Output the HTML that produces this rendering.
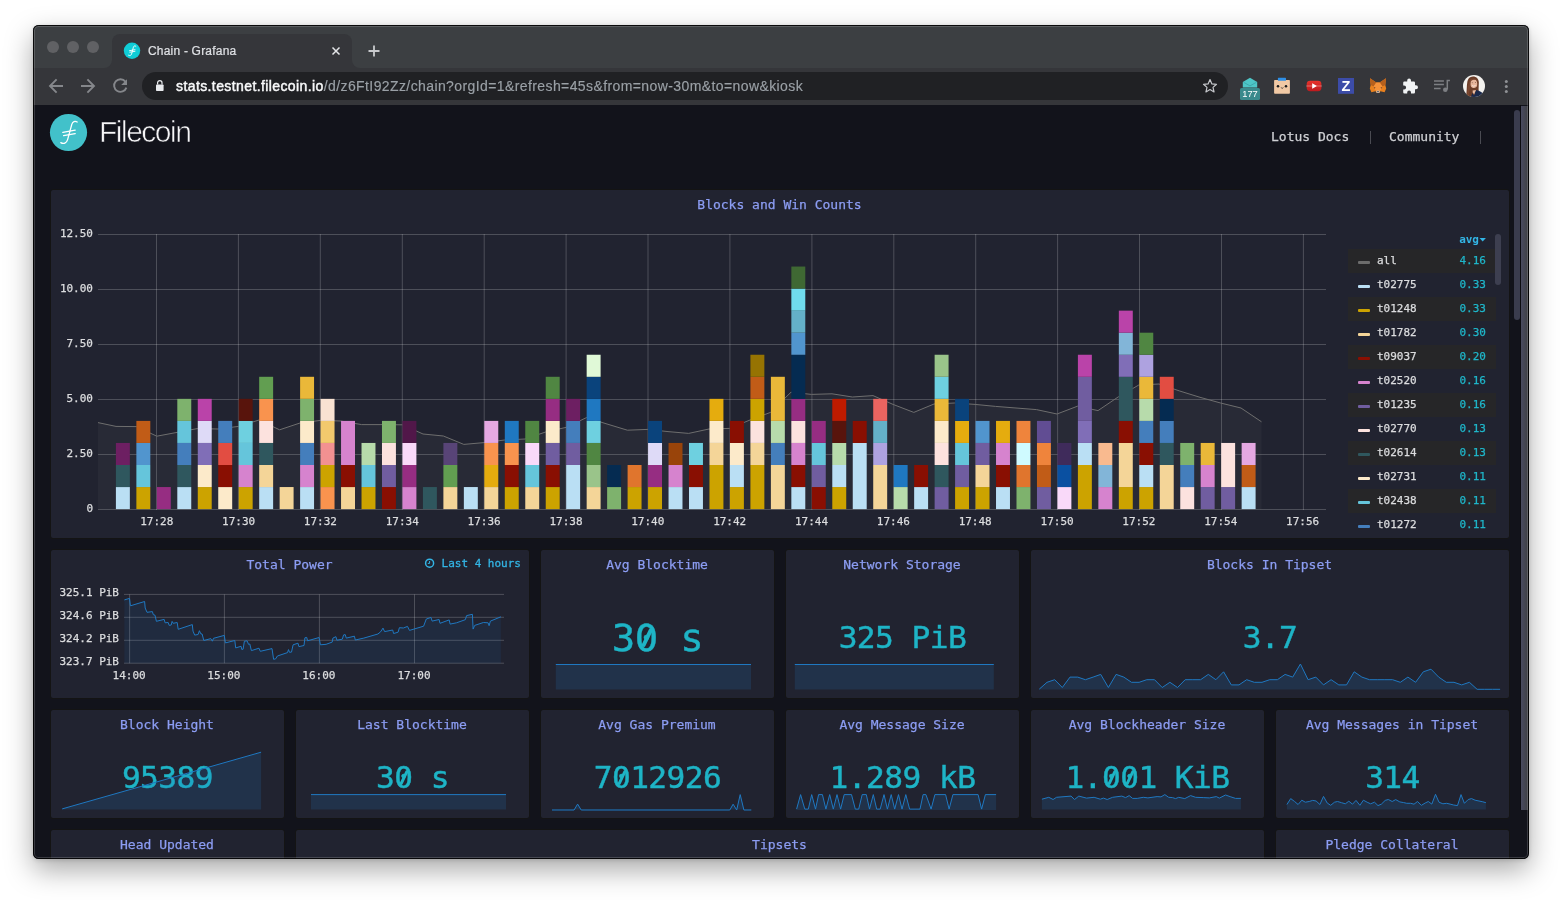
<!DOCTYPE html><html><head><meta charset="utf-8"><title>Chain - Grafana</title><style>
*{box-sizing:border-box}
html,body{margin:0;padding:0}
body{width:1562px;height:900px;overflow:hidden;background:#fff;position:relative;font-family:"DejaVu Sans Mono","Liberation Mono",monospace}
.win{position:absolute;left:33px;top:25px;width:1496px;height:834px;border-radius:5.5px;overflow:hidden;
 box-shadow:0 11px 28px 0 rgba(0,0,0,.34),0 1px 4px rgba(0,0,0,.14);background:#12131b}
.in{position:absolute;left:-33px;top:-25px;width:1562px;height:900px;will-change:transform}
.abs{position:absolute}
.frame{position:absolute;left:33px;top:25px;width:1496px;height:43px;background:#3c3f42}
.toolbar{position:absolute;left:33px;top:68px;width:1496px;height:37px;background:#35363a}
.tab{position:absolute;left:112px;top:34px;width:240px;height:34px;background:#35363a;border-radius:8px 8px 0 0}
.tl{position:absolute;width:12px;height:12px;border-radius:50%;background:#606164;top:41px}
.url{position:absolute;left:142px;top:72px;width:1086px;height:28px;border-radius:14px;background:#202124}
.t{position:absolute;white-space:nowrap;line-height:1}
.panel{position:absolute;background:#212330;border:1px solid #141414;border-radius:3px}
.ptitle{position:absolute;white-space:nowrap;color:#8c9df3;font-size:13px;line-height:16px;text-align:center;font-weight:normal;-webkit-text-stroke:0.25px #8c9df3}
.ax{position:absolute;white-space:nowrap;color:#dcdddf;font-size:11px;line-height:12px;-webkit-text-stroke:0.25px #dcdddf}
.val{position:absolute;white-space:nowrap;color:#1eb4c6;text-align:center;line-height:1;letter-spacing:-0.017em;-webkit-text-stroke:0.45px #1eb4c6;transform:scaleY(0.968);transform-origin:50% 88%}
.val s{position:relative;text-decoration:none;display:inline-block}
.val s::after{content:'';position:absolute;left:53.5%;top:48.8%;width:0.09em;height:0.5em;background:#1eb4c6;border-radius:0.04em;transform:translate(-50%,-50%) rotate(25deg)}
.lg{position:absolute;left:1348px;width:148px;height:24px}
.lg.odd{background:#262628}
.lg i{position:absolute;left:10px;top:12px;width:12px;height:3px;border-radius:1px}
.lg b{position:absolute;left:29px;top:5px;font-weight:normal;font-size:11px;line-height:13px;color:#dcdddf;-webkit-text-stroke:0.25px #dcdddf}
.lg u{position:absolute;right:10px;top:5px;text-decoration:none;font-size:11px;line-height:13px;color:#1fb6c9;-webkit-text-stroke:0.25px #1fb6c9}
</style></head><body>
<div class="win"><div class="in">
<div class="frame"></div><div class="tab"></div><div class="toolbar"></div>
<div class="tl" style="left:47px"></div>
<div class="tl" style="left:67px"></div>
<div class="tl" style="left:87px"></div>
<div class="url"></div>
<div class="t" id="tabtitle" style="left:148px;top:44px;font-family:'Liberation Sans',sans-serif;font-size:12px;color:#dfe1e5;line-height:14px;letter-spacing:0.2px;-webkit-text-stroke:0.2px #dfe1e5">Chain - Grafana</div>
<div class="t" id="urltext" style="left:176px;top:78px;font-family:'Liberation Sans',sans-serif;font-size:14px;line-height:16px;color:#9aa0a6;letter-spacing:0.4px;-webkit-text-stroke:0.15px #9aa0a6"><span style="color:#f8f9fa;-webkit-text-stroke:0.45px #f8f9fa">stats.testnet.filecoin.io</span>/d/z6FtI92Zz/chain?orgId=1&amp;refresh=45s&amp;from=now-30m&amp;to=now&amp;kiosk</div>
<div class="t" id="brand" style="left:99px;top:115.3px;font-family:'Liberation Sans',sans-serif;font-size:30px;line-height:34px;color:#f6f6f8;letter-spacing:-1.5px;-webkit-text-stroke:0.65px #12131b">Filecoin</div>
<div class="t" id="nav1" style="left:1271px;top:129px;font-size:13px;line-height:16px;color:#cfd0d4;-webkit-text-stroke:0.25px #cfd0d4">Lotus Docs</div>
<div class="t" id="nav2" style="left:1389px;top:129px;font-size:13px;line-height:16px;color:#cfd0d4;-webkit-text-stroke:0.25px #cfd0d4">Community</div>
<div class="abs" style="left:1370px;top:131px;width:1px;height:13px;background:#4a4b52"></div>
<div class="abs" style="left:1480px;top:131px;width:1px;height:13px;background:#4a4b52"></div>
<div class="panel" style="left:50px;top:189px;width:1460px;height:350px"></div>
<div class="panel" style="left:50px;top:549px;width:480px;height:150px"></div>
<div class="panel" style="left:540px;top:549px;width:235px;height:150px"></div>
<div class="panel" style="left:785px;top:549px;width:235px;height:150px"></div>
<div class="panel" style="left:1030px;top:549px;width:480px;height:150px"></div>
<div class="panel" style="left:50px;top:709px;width:235px;height:110px"></div>
<div class="panel" style="left:295px;top:709px;width:235px;height:110px"></div>
<div class="panel" style="left:540px;top:709px;width:235px;height:110px"></div>
<div class="panel" style="left:785px;top:709px;width:235px;height:110px"></div>
<div class="panel" style="left:1030px;top:709px;width:235px;height:110px"></div>
<div class="panel" style="left:1275px;top:709px;width:235px;height:110px"></div>
<div class="panel" style="left:50px;top:829px;width:235px;height:60px"></div>
<div class="panel" style="left:295px;top:829px;width:970px;height:60px"></div>
<div class="panel" style="left:1275px;top:829px;width:235px;height:60px"></div>
<div class="ptitle" style="left:49.5px;width:1460px;top:197px">Blocks and Win Counts</div>
<div class="ptitle" style="left:49.5px;width:480px;top:557px">Total Power</div>
<div class="ptitle" style="left:539.5px;width:235px;top:557px">Avg Blocktime</div>
<div class="ptitle" style="left:784.5px;width:235px;top:557px">Network Storage</div>
<div class="ptitle" style="left:1029.5px;width:480px;top:557px">Blocks In Tipset</div>
<div class="ptitle" style="left:49.5px;width:235px;top:717px">Block Height</div>
<div class="ptitle" style="left:294.5px;width:235px;top:717px">Last Blocktime</div>
<div class="ptitle" style="left:539.5px;width:235px;top:717px">Avg Gas Premium</div>
<div class="ptitle" style="left:784.5px;width:235px;top:717px">Avg Message Size</div>
<div class="ptitle" style="left:1029.5px;width:235px;top:717px">Avg Blockheader Size</div>
<div class="ptitle" style="left:1274.5px;width:235px;top:717px">Avg Messages in Tipset</div>
<div class="ptitle" style="left:49.5px;width:235px;top:837px">Head Updated</div>
<div class="ptitle" style="left:294.5px;width:970px;top:837px">Tipsets</div>
<div class="ptitle" style="left:1274.5px;width:235px;top:837px">Pledge Collateral</div>
<div class="val" style="left:540px;width:235px;top:617.7px;font-size:39px">3<s>0</s> s</div>
<div class="val" style="left:785px;width:235px;top:621.5px;font-size:31.2px">325 PiB</div>
<div class="val" style="left:1030px;width:480px;top:621.5px;font-size:31.2px">3.7</div>
<div class="val" style="left:50px;width:235px;top:761.8px;font-size:31.2px">95389</div>
<div class="val" style="left:295px;width:235px;top:761.8px;font-size:31.2px">3<s>0</s> s</div>
<div class="val" style="left:540px;width:235px;top:761.8px;font-size:31.2px">7<s>0</s>12926</div>
<div class="val" style="left:785px;width:235px;top:761.8px;font-size:31.2px">1.289 kB</div>
<div class="val" style="left:1030px;width:235px;top:761.8px;font-size:31.2px">1.<s>0</s><s>0</s>1 KiB</div>
<div class="val" style="left:1275px;width:235px;top:761.8px;font-size:31.2px">314</div>
<div class="ax" style="right:1469px;top:227.6px">12.50</div>
<div class="ax" style="right:1469px;top:282.6px">10.00</div>
<div class="ax" style="right:1469px;top:337.7px">7.50</div>
<div class="ax" style="right:1469px;top:392.7px">5.00</div>
<div class="ax" style="right:1469px;top:447.8px">2.50</div>
<div class="ax" style="right:1469px;top:502.8px">0</div>
<div class="ax" style="left:126.8px;width:60px;text-align:center;top:516px">17:28</div>
<div class="ax" style="left:208.6px;width:60px;text-align:center;top:516px">17:30</div>
<div class="ax" style="left:290.4px;width:60px;text-align:center;top:516px">17:32</div>
<div class="ax" style="left:372.3px;width:60px;text-align:center;top:516px">17:34</div>
<div class="ax" style="left:454.1px;width:60px;text-align:center;top:516px">17:36</div>
<div class="ax" style="left:536.0px;width:60px;text-align:center;top:516px">17:38</div>
<div class="ax" style="left:617.8px;width:60px;text-align:center;top:516px">17:40</div>
<div class="ax" style="left:699.7px;width:60px;text-align:center;top:516px">17:42</div>
<div class="ax" style="left:781.5px;width:60px;text-align:center;top:516px">17:44</div>
<div class="ax" style="left:863.4px;width:60px;text-align:center;top:516px">17:46</div>
<div class="ax" style="left:945.2px;width:60px;text-align:center;top:516px">17:48</div>
<div class="ax" style="left:1027.1px;width:60px;text-align:center;top:516px">17:50</div>
<div class="ax" style="left:1108.9px;width:60px;text-align:center;top:516px">17:52</div>
<div class="ax" style="left:1190.8px;width:60px;text-align:center;top:516px">17:54</div>
<div class="ax" style="left:1272.6px;width:60px;text-align:center;top:516px">17:56</div>
<div class="ax" style="right:1443px;top:587.2px">325.1 PiB</div>
<div class="ax" style="right:1443px;top:610.1px">324.6 PiB</div>
<div class="ax" style="right:1443px;top:633.1px">324.2 PiB</div>
<div class="ax" style="right:1443px;top:656.0px">323.7 PiB</div>
<div class="ax" style="left:99.1px;width:60px;text-align:center;top:669.5px">14:00</div>
<div class="ax" style="left:193.9px;width:60px;text-align:center;top:669.5px">15:00</div>
<div class="ax" style="left:288.9px;width:60px;text-align:center;top:669.5px">16:00</div>
<div class="ax" style="left:384.0px;width:60px;text-align:center;top:669.5px">17:00</div>
<div class="t" id="last4" style="right:1041px;top:557px;font-size:11px;line-height:13px;color:#33b5e5;-webkit-text-stroke:0.3px #33b5e5">Last 4 hours</div>
<div class="abs" style="left:1340px;top:230px;width:170px;height:308px;overflow:hidden">
<div class="t" style="right:31px;top:3px;font-size:11px;line-height:13px;color:#33b5e5;font-weight:bold">avg</div>
</div>
<div class="lg odd" style="top:249px;height:24px;overflow:hidden"><i style="background:#6c6c6c"></i><b>all</b><u>4.16</u></div>
<div class="lg" style="top:273px;height:24px;overflow:hidden"><i style="background:#BADFF4"></i><b>t02775</b><u>0.33</u></div>
<div class="lg odd" style="top:297px;height:24px;overflow:hidden"><i style="background:#CCA300"></i><b>t01248</b><u>0.33</u></div>
<div class="lg" style="top:321px;height:24px;overflow:hidden"><i style="background:#F4D598"></i><b>t01782</b><u>0.30</u></div>
<div class="lg odd" style="top:345px;height:24px;overflow:hidden"><i style="background:#890F02"></i><b>t09037</b><u>0.20</u></div>
<div class="lg" style="top:369px;height:24px;overflow:hidden"><i style="background:#D683CE"></i><b>t02520</b><u>0.16</u></div>
<div class="lg odd" style="top:393px;height:24px;overflow:hidden"><i style="background:#705DA0"></i><b>t01235</b><u>0.16</u></div>
<div class="lg" style="top:417px;height:24px;overflow:hidden"><i style="background:#FCE2DE"></i><b>t02770</b><u>0.13</u></div>
<div class="lg odd" style="top:441px;height:24px;overflow:hidden"><i style="background:#2F575E"></i><b>t02614</b><u>0.13</u></div>
<div class="lg" style="top:465px;height:24px;overflow:hidden"><i style="background:#FCEACA"></i><b>t02731</b><u>0.11</u></div>
<div class="lg odd" style="top:489px;height:24px;overflow:hidden"><i style="background:#65C5DB"></i><b>t02438</b><u>0.11</u></div>
<div class="lg" style="top:513px;height:24px;overflow:hidden"><i style="background:#447EBC"></i><b>t01272</b><u>0.11</u></div>
<svg class="abs" style="left:0;top:0" width="1562" height="900" viewBox="0 0 1562 900"><rect x="98" y="234" width="1228" height="1" fill="rgba(255,255,255,0.2)"/><rect x="98" y="289" width="1228" height="1" fill="rgba(255,255,255,0.2)"/><rect x="98" y="344" width="1228" height="1" fill="rgba(255,255,255,0.2)"/><rect x="98" y="399" width="1228" height="1" fill="rgba(255,255,255,0.2)"/><rect x="98" y="454" width="1228" height="1" fill="rgba(255,255,255,0.2)"/><rect x="98" y="509" width="1228" height="1" fill="rgba(255,255,255,0.2)"/><rect x="156.0" y="234" width="1" height="276" fill="rgba(255,255,255,0.2)"/><rect x="237.9" y="234" width="1" height="276" fill="rgba(255,255,255,0.2)"/><rect x="319.8" y="234" width="1" height="276" fill="rgba(255,255,255,0.2)"/><rect x="401.8" y="234" width="1" height="276" fill="rgba(255,255,255,0.2)"/><rect x="483.7" y="234" width="1" height="276" fill="rgba(255,255,255,0.2)"/><rect x="565.6" y="234" width="1" height="276" fill="rgba(255,255,255,0.2)"/><rect x="647.5" y="234" width="1" height="276" fill="rgba(255,255,255,0.2)"/><rect x="729.4" y="234" width="1" height="276" fill="rgba(255,255,255,0.2)"/><rect x="811.4" y="234" width="1" height="276" fill="rgba(255,255,255,0.2)"/><rect x="893.3" y="234" width="1" height="276" fill="rgba(255,255,255,0.2)"/><rect x="975.2" y="234" width="1" height="276" fill="rgba(255,255,255,0.2)"/><rect x="1057.1" y="234" width="1" height="276" fill="rgba(255,255,255,0.2)"/><rect x="1139.0" y="234" width="1" height="276" fill="rgba(255,255,255,0.2)"/><rect x="1221.0" y="234" width="1" height="276" fill="rgba(255,255,255,0.2)"/><rect x="1302.9" y="234" width="1" height="276" fill="rgba(255,255,255,0.2)"/><polygon points="98.0,422.6 116.0,426.4 136.4,426.6 156.8,436.2 177.0,432.4 197.7,428.5 218.0,429.0 238.6,426.4 259.0,420.0 279.6,429.8 300.0,423.0 320.5,420.4 341.0,421.0 361.6,424.6 382.0,424.6 402.5,424.8 423.0,434.0 443.4,436.0 463.8,444.4 484.0,442.6 504.7,440.0 525.0,439.0 545.6,432.0 566.0,427.4 586.5,417.6 607.0,424.0 627.4,430.2 647.8,429.4 668.0,431.6 688.7,433.4 709.0,429.0 729.6,428.4 750.0,420.0 770.5,412.4 791.0,392.2 811.4,394.4 832.0,393.8 852.4,397.0 873.0,395.6 893.0,404.4 913.8,412.4 934.0,404.0 954.7,403.0 975.0,404.4 995.6,406.4 1016.0,408.0 1036.5,409.6 1057.0,414.0 1077.5,406.2 1098.0,410.6 1118.4,396.8 1138.8,385.0 1159.0,384.0 1179.7,391.0 1200.0,397.3 1220.6,403.0 1241.0,408.0 1261.5,421.8 1261.5,509.5 98.0,509.5" fill="rgba(128,128,128,0.075)"/><polyline points="98.0,422.6 116.0,426.4 136.4,426.6 156.8,436.2 177.0,432.4 197.7,428.5 218.0,429.0 238.6,426.4 259.0,420.0 279.6,429.8 300.0,423.0 320.5,420.4 341.0,421.0 361.6,424.6 382.0,424.6 402.5,424.8 423.0,434.0 443.4,436.0 463.8,444.4 484.0,442.6 504.7,440.0 525.0,439.0 545.6,432.0 566.0,427.4 586.5,417.6 607.0,424.0 627.4,430.2 647.8,429.4 668.0,431.6 688.7,433.4 709.0,429.0 729.6,428.4 750.0,420.0 770.5,412.4 791.0,392.2 811.4,394.4 832.0,393.8 852.4,397.0 873.0,395.6 893.0,404.4 913.8,412.4 934.0,404.0 954.7,403.0 975.0,404.4 995.6,406.4 1016.0,408.0 1036.5,409.6 1057.0,414.0 1077.5,406.2 1098.0,410.6 1118.4,396.8 1138.8,385.0 1159.0,384.0 1179.7,391.0 1200.0,397.3 1220.6,403.0 1241.0,408.0 1261.5,421.8" fill="none" stroke="#6e6e6e" stroke-width="1"/><rect x="115.90" y="487.05" width="13.95" height="22.05" fill="#BADFF4"/><rect x="115.90" y="465.00" width="13.95" height="22.05" fill="#2F575E"/><rect x="115.90" y="442.95" width="13.95" height="22.05" fill="#6D1F62"/><rect x="136.37" y="487.05" width="13.95" height="22.05" fill="#CCA300"/><rect x="136.37" y="465.00" width="13.95" height="22.05" fill="#65C5DB"/><rect x="136.37" y="442.95" width="13.95" height="22.05" fill="#5195CE"/><rect x="136.37" y="420.90" width="13.95" height="22.05" fill="#C15C17"/><rect x="156.84" y="487.05" width="13.95" height="22.05" fill="#962D82"/><rect x="177.30" y="487.05" width="13.95" height="22.05" fill="#BADFF4"/><rect x="177.30" y="465.00" width="13.95" height="22.05" fill="#2F575E"/><rect x="177.30" y="442.95" width="13.95" height="22.05" fill="#447EBC"/><rect x="177.30" y="420.90" width="13.95" height="22.05" fill="#65C5DB"/><rect x="177.30" y="398.85" width="13.95" height="22.05" fill="#7EB26D"/><rect x="197.77" y="487.05" width="13.95" height="22.05" fill="#CCA300"/><rect x="197.77" y="465.00" width="13.95" height="22.05" fill="#FCEACA"/><rect x="197.77" y="442.95" width="13.95" height="22.05" fill="#806EB7"/><rect x="197.77" y="420.90" width="13.95" height="22.05" fill="#DEDAF7"/><rect x="197.77" y="398.85" width="13.95" height="22.05" fill="#BA43A9"/><rect x="218.24" y="487.05" width="13.95" height="22.05" fill="#FCEACA"/><rect x="218.24" y="465.00" width="13.95" height="22.05" fill="#890F02"/><rect x="218.24" y="442.95" width="13.95" height="22.05" fill="#E24D42"/><rect x="218.24" y="420.90" width="13.95" height="22.05" fill="#447EBC"/><rect x="238.71" y="487.05" width="13.95" height="22.05" fill="#CCA300"/><rect x="238.71" y="465.00" width="13.95" height="22.05" fill="#D683CE"/><rect x="238.71" y="442.95" width="13.95" height="22.05" fill="#65C5DB"/><rect x="238.71" y="420.90" width="13.95" height="22.05" fill="#6ED0E0"/><rect x="238.71" y="398.85" width="13.95" height="22.05" fill="#58140C"/><rect x="259.18" y="487.05" width="13.95" height="22.05" fill="#BADFF4"/><rect x="259.18" y="465.00" width="13.95" height="22.05" fill="#F4D598"/><rect x="259.18" y="442.95" width="13.95" height="22.05" fill="#2F575E"/><rect x="259.18" y="420.90" width="13.95" height="22.05" fill="#FCE2DE"/><rect x="259.18" y="398.85" width="13.95" height="22.05" fill="#F9934E"/><rect x="259.18" y="376.80" width="13.95" height="22.05" fill="#629E51"/><rect x="279.64" y="487.05" width="13.95" height="22.05" fill="#F4D598"/><rect x="300.11" y="487.05" width="13.95" height="22.05" fill="#BADFF4"/><rect x="300.11" y="465.00" width="13.95" height="22.05" fill="#D683CE"/><rect x="300.11" y="442.95" width="13.95" height="22.05" fill="#447EBC"/><rect x="300.11" y="420.90" width="13.95" height="22.05" fill="#FCEACA"/><rect x="300.11" y="398.85" width="13.95" height="22.05" fill="#7EB26D"/><rect x="300.11" y="376.80" width="13.95" height="22.05" fill="#EAB839"/><rect x="320.58" y="487.05" width="13.95" height="22.05" fill="#F9934E"/><rect x="320.58" y="465.00" width="13.95" height="22.05" fill="#CCA300"/><rect x="320.58" y="442.95" width="13.95" height="22.05" fill="#F29191"/><rect x="320.58" y="420.90" width="13.95" height="22.05" fill="#F2C96D"/><rect x="320.58" y="398.85" width="13.95" height="22.05" fill="#F9E2D2"/><rect x="341.05" y="487.05" width="13.95" height="22.05" fill="#F4D598"/><rect x="341.05" y="465.00" width="13.95" height="22.05" fill="#890F02"/><rect x="341.05" y="420.90" width="13.95" height="44.10" fill="#D683CE"/><rect x="361.52" y="487.05" width="13.95" height="22.05" fill="#CCA300"/><rect x="361.52" y="465.00" width="13.95" height="22.05" fill="#65C5DB"/><rect x="361.52" y="442.95" width="13.95" height="22.05" fill="#B7DBAB"/><rect x="381.98" y="487.05" width="13.95" height="22.05" fill="#890F02"/><rect x="381.98" y="465.00" width="13.95" height="22.05" fill="#705DA0"/><rect x="381.98" y="442.95" width="13.95" height="22.05" fill="#FCE2DE"/><rect x="381.98" y="420.90" width="13.95" height="22.05" fill="#7EB26D"/><rect x="402.45" y="487.05" width="13.95" height="22.05" fill="#D683CE"/><rect x="402.45" y="465.00" width="13.95" height="22.05" fill="#962D82"/><rect x="402.45" y="442.95" width="13.95" height="22.05" fill="#F9D9F9"/><rect x="402.45" y="420.90" width="13.95" height="22.05" fill="#511749"/><rect x="422.92" y="487.05" width="13.95" height="22.05" fill="#2F575E"/><rect x="443.39" y="487.05" width="13.95" height="22.05" fill="#F4D598"/><rect x="443.39" y="465.00" width="13.95" height="22.05" fill="#629E51"/><rect x="443.39" y="442.95" width="13.95" height="22.05" fill="#584477"/><rect x="463.86" y="487.05" width="13.95" height="22.05" fill="#BADFF4"/><rect x="484.32" y="487.05" width="13.95" height="22.05" fill="#F4D598"/><rect x="484.32" y="465.00" width="13.95" height="22.05" fill="#E5AC0E"/><rect x="484.32" y="442.95" width="13.95" height="22.05" fill="#F9934E"/><rect x="484.32" y="420.90" width="13.95" height="22.05" fill="#E5A8E2"/><rect x="504.79" y="487.05" width="13.95" height="22.05" fill="#CCA300"/><rect x="504.79" y="465.00" width="13.95" height="22.05" fill="#890F02"/><rect x="504.79" y="442.95" width="13.95" height="22.05" fill="#F9934E"/><rect x="504.79" y="420.90" width="13.95" height="22.05" fill="#1F78C1"/><rect x="525.26" y="487.05" width="13.95" height="22.05" fill="#F4D598"/><rect x="525.26" y="465.00" width="13.95" height="22.05" fill="#65C5DB"/><rect x="525.26" y="442.95" width="13.95" height="22.05" fill="#F9D9F9"/><rect x="525.26" y="420.90" width="13.95" height="22.05" fill="#508642"/><rect x="545.73" y="487.05" width="13.95" height="22.05" fill="#CCA300"/><rect x="545.73" y="465.00" width="13.95" height="22.05" fill="#890F02"/><rect x="545.73" y="442.95" width="13.95" height="22.05" fill="#705DA0"/><rect x="545.73" y="420.90" width="13.95" height="22.05" fill="#FCEACA"/><rect x="545.73" y="398.85" width="13.95" height="22.05" fill="#962D82"/><rect x="545.73" y="376.80" width="13.95" height="22.05" fill="#508642"/><rect x="566.20" y="465.00" width="13.95" height="44.10" fill="#BADFF4"/><rect x="566.20" y="442.95" width="13.95" height="22.05" fill="#705DA0"/><rect x="566.20" y="420.90" width="13.95" height="22.05" fill="#447EBC"/><rect x="566.20" y="398.85" width="13.95" height="22.05" fill="#6D1F62"/><rect x="586.66" y="487.05" width="13.95" height="22.05" fill="#F4D598"/><rect x="586.66" y="465.00" width="13.95" height="22.05" fill="#9AC48A"/><rect x="586.66" y="442.95" width="13.95" height="22.05" fill="#508642"/><rect x="586.66" y="420.90" width="13.95" height="22.05" fill="#6ED0E0"/><rect x="586.66" y="398.85" width="13.95" height="22.05" fill="#1F78C1"/><rect x="586.66" y="376.80" width="13.95" height="22.05" fill="#0A437C"/><rect x="586.66" y="354.75" width="13.95" height="22.05" fill="#E0F9D7"/><rect x="607.13" y="487.05" width="13.95" height="22.05" fill="#7EB26D"/><rect x="607.13" y="465.00" width="13.95" height="22.05" fill="#052B51"/><rect x="627.60" y="487.05" width="13.95" height="22.05" fill="#CCA300"/><rect x="627.60" y="465.00" width="13.95" height="22.05" fill="#E0752D"/><rect x="648.07" y="487.05" width="13.95" height="22.05" fill="#CCA300"/><rect x="648.07" y="465.00" width="13.95" height="22.05" fill="#962D82"/><rect x="648.07" y="442.95" width="13.95" height="22.05" fill="#DEDAF7"/><rect x="648.07" y="420.90" width="13.95" height="22.05" fill="#0A437C"/><rect x="668.54" y="487.05" width="13.95" height="22.05" fill="#BADFF4"/><rect x="668.54" y="465.00" width="13.95" height="22.05" fill="#D683CE"/><rect x="668.54" y="442.95" width="13.95" height="22.05" fill="#99440A"/><rect x="689.00" y="487.05" width="13.95" height="22.05" fill="#BADFF4"/><rect x="689.00" y="465.00" width="13.95" height="22.05" fill="#890F02"/><rect x="689.00" y="442.95" width="13.95" height="22.05" fill="#6ED0E0"/><rect x="709.47" y="465.00" width="13.95" height="44.10" fill="#CCA300"/><rect x="709.47" y="442.95" width="13.95" height="22.05" fill="#F4D598"/><rect x="709.47" y="420.90" width="13.95" height="22.05" fill="#FCEACA"/><rect x="709.47" y="398.85" width="13.95" height="22.05" fill="#E5AC0E"/><rect x="729.94" y="487.05" width="13.95" height="22.05" fill="#CCA300"/><rect x="729.94" y="465.00" width="13.95" height="22.05" fill="#BADFF4"/><rect x="729.94" y="442.95" width="13.95" height="22.05" fill="#FCEACA"/><rect x="729.94" y="420.90" width="13.95" height="22.05" fill="#890F02"/><rect x="750.41" y="465.00" width="13.95" height="44.10" fill="#CCA300"/><rect x="750.41" y="442.95" width="13.95" height="22.05" fill="#F4D598"/><rect x="750.41" y="420.90" width="13.95" height="22.05" fill="#FCE2DE"/><rect x="750.41" y="398.85" width="13.95" height="22.05" fill="#CCA300"/><rect x="750.41" y="376.80" width="13.95" height="22.05" fill="#C15C17"/><rect x="750.41" y="354.75" width="13.95" height="22.05" fill="#967302"/><rect x="770.88" y="465.00" width="13.95" height="44.10" fill="#F4D598"/><rect x="770.88" y="442.95" width="13.95" height="22.05" fill="#447EBC"/><rect x="770.88" y="420.90" width="13.95" height="22.05" fill="#B7DBAB"/><rect x="770.88" y="376.80" width="13.95" height="44.10" fill="#EAB839"/><rect x="791.34" y="487.05" width="13.95" height="22.05" fill="#BADFF4"/><rect x="791.34" y="465.00" width="13.95" height="22.05" fill="#890F02"/><rect x="791.34" y="442.95" width="13.95" height="22.05" fill="#D683CE"/><rect x="791.34" y="420.90" width="13.95" height="22.05" fill="#FCE2DE"/><rect x="791.34" y="398.85" width="13.95" height="22.05" fill="#962D82"/><rect x="791.34" y="354.75" width="13.95" height="44.10" fill="#052B51"/><rect x="791.34" y="332.70" width="13.95" height="22.05" fill="#5195CE"/><rect x="791.34" y="310.65" width="13.95" height="22.05" fill="#64B0C8"/><rect x="791.34" y="288.60" width="13.95" height="22.05" fill="#70DBED"/><rect x="791.34" y="266.55" width="13.95" height="22.05" fill="#3F6833"/><rect x="811.81" y="487.05" width="13.95" height="22.05" fill="#890F02"/><rect x="811.81" y="465.00" width="13.95" height="22.05" fill="#705DA0"/><rect x="811.81" y="442.95" width="13.95" height="22.05" fill="#65C5DB"/><rect x="811.81" y="420.90" width="13.95" height="22.05" fill="#962D82"/><rect x="832.28" y="487.05" width="13.95" height="22.05" fill="#CCA300"/><rect x="832.28" y="465.00" width="13.95" height="22.05" fill="#BADFF4"/><rect x="832.28" y="442.95" width="13.95" height="22.05" fill="#B7DBAB"/><rect x="832.28" y="420.90" width="13.95" height="22.05" fill="#58140C"/><rect x="832.28" y="398.85" width="13.95" height="22.05" fill="#BF1B00"/><rect x="852.75" y="442.95" width="13.95" height="66.15" fill="#BADFF4"/><rect x="852.75" y="420.90" width="13.95" height="22.05" fill="#890F02"/><rect x="873.22" y="465.00" width="13.95" height="44.10" fill="#F4D598"/><rect x="873.22" y="442.95" width="13.95" height="22.05" fill="#AEA2E0"/><rect x="873.22" y="420.90" width="13.95" height="22.05" fill="#64B0C8"/><rect x="873.22" y="398.85" width="13.95" height="22.05" fill="#EA6460"/><rect x="893.68" y="487.05" width="13.95" height="22.05" fill="#B7DBAB"/><rect x="893.68" y="465.00" width="13.95" height="22.05" fill="#1F78C1"/><rect x="914.15" y="487.05" width="13.95" height="22.05" fill="#BADFF4"/><rect x="914.15" y="465.00" width="13.95" height="22.05" fill="#890F02"/><rect x="934.62" y="487.05" width="13.95" height="22.05" fill="#705DA0"/><rect x="934.62" y="465.00" width="13.95" height="22.05" fill="#2F575E"/><rect x="934.62" y="442.95" width="13.95" height="22.05" fill="#FCE2DE"/><rect x="934.62" y="420.90" width="13.95" height="22.05" fill="#FCEACA"/><rect x="934.62" y="398.85" width="13.95" height="22.05" fill="#EAB839"/><rect x="934.62" y="376.80" width="13.95" height="22.05" fill="#6ED0E0"/><rect x="934.62" y="354.75" width="13.95" height="22.05" fill="#9AC48A"/><rect x="955.09" y="487.05" width="13.95" height="22.05" fill="#CCA300"/><rect x="955.09" y="465.00" width="13.95" height="22.05" fill="#705DA0"/><rect x="955.09" y="442.95" width="13.95" height="22.05" fill="#65C5DB"/><rect x="955.09" y="420.90" width="13.95" height="22.05" fill="#E5AC0E"/><rect x="955.09" y="398.85" width="13.95" height="22.05" fill="#0A437C"/><rect x="975.56" y="487.05" width="13.95" height="22.05" fill="#CCA300"/><rect x="975.56" y="465.00" width="13.95" height="22.05" fill="#F4D598"/><rect x="975.56" y="442.95" width="13.95" height="22.05" fill="#705DA0"/><rect x="975.56" y="420.90" width="13.95" height="22.05" fill="#5195CE"/><rect x="996.02" y="487.05" width="13.95" height="22.05" fill="#BADFF4"/><rect x="996.02" y="465.00" width="13.95" height="22.05" fill="#890F02"/><rect x="996.02" y="442.95" width="13.95" height="22.05" fill="#D683CE"/><rect x="996.02" y="420.90" width="13.95" height="22.05" fill="#E5AC0E"/><rect x="1016.49" y="487.05" width="13.95" height="22.05" fill="#7EB26D"/><rect x="1016.49" y="465.00" width="13.95" height="22.05" fill="#E0752D"/><rect x="1016.49" y="442.95" width="13.95" height="22.05" fill="#CFFAFF"/><rect x="1016.49" y="420.90" width="13.95" height="22.05" fill="#EF843C"/><rect x="1036.96" y="487.05" width="13.95" height="22.05" fill="#705DA0"/><rect x="1036.96" y="465.00" width="13.95" height="22.05" fill="#C15C17"/><rect x="1036.96" y="442.95" width="13.95" height="22.05" fill="#EF843C"/><rect x="1036.96" y="420.90" width="13.95" height="22.05" fill="#614D93"/><rect x="1057.43" y="487.05" width="13.95" height="22.05" fill="#F9D9F9"/><rect x="1057.43" y="465.00" width="13.95" height="22.05" fill="#0A50A1"/><rect x="1057.43" y="442.95" width="13.95" height="22.05" fill="#3F2B5B"/><rect x="1077.90" y="465.00" width="13.95" height="44.10" fill="#CCA300"/><rect x="1077.90" y="442.95" width="13.95" height="22.05" fill="#BADFF4"/><rect x="1077.90" y="420.90" width="13.95" height="22.05" fill="#806EB7"/><rect x="1077.90" y="376.80" width="13.95" height="44.10" fill="#705DA0"/><rect x="1077.90" y="354.75" width="13.95" height="22.05" fill="#BA43A9"/><rect x="1098.36" y="487.05" width="13.95" height="22.05" fill="#D683CE"/><rect x="1098.36" y="465.00" width="13.95" height="22.05" fill="#82B5D8"/><rect x="1098.36" y="442.95" width="13.95" height="22.05" fill="#F9BA8F"/><rect x="1118.83" y="487.05" width="13.95" height="22.05" fill="#CCA300"/><rect x="1118.83" y="442.95" width="13.95" height="44.10" fill="#F4D598"/><rect x="1118.83" y="420.90" width="13.95" height="22.05" fill="#890F02"/><rect x="1118.83" y="376.80" width="13.95" height="44.10" fill="#2F575E"/><rect x="1118.83" y="354.75" width="13.95" height="22.05" fill="#806EB7"/><rect x="1118.83" y="332.70" width="13.95" height="22.05" fill="#82B5D8"/><rect x="1118.83" y="310.65" width="13.95" height="22.05" fill="#BA43A9"/><rect x="1139.30" y="487.05" width="13.95" height="22.05" fill="#CCA300"/><rect x="1139.30" y="465.00" width="13.95" height="22.05" fill="#BADFF4"/><rect x="1139.30" y="442.95" width="13.95" height="22.05" fill="#890F02"/><rect x="1139.30" y="420.90" width="13.95" height="22.05" fill="#447EBC"/><rect x="1139.30" y="398.85" width="13.95" height="22.05" fill="#B7DBAB"/><rect x="1139.30" y="376.80" width="13.95" height="22.05" fill="#EAB839"/><rect x="1139.30" y="354.75" width="13.95" height="22.05" fill="#AEA2E0"/><rect x="1139.30" y="332.70" width="13.95" height="22.05" fill="#508642"/><rect x="1159.77" y="465.00" width="13.95" height="44.10" fill="#F4D598"/><rect x="1159.77" y="442.95" width="13.95" height="22.05" fill="#2F575E"/><rect x="1159.77" y="420.90" width="13.95" height="22.05" fill="#447EBC"/><rect x="1159.77" y="398.85" width="13.95" height="22.05" fill="#052B51"/><rect x="1159.77" y="376.80" width="13.95" height="22.05" fill="#E24D42"/><rect x="1180.24" y="487.05" width="13.95" height="22.05" fill="#FCE2DE"/><rect x="1180.24" y="465.00" width="13.95" height="22.05" fill="#447EBC"/><rect x="1180.24" y="442.95" width="13.95" height="22.05" fill="#7EB26D"/><rect x="1200.70" y="487.05" width="13.95" height="22.05" fill="#705DA0"/><rect x="1200.70" y="465.00" width="13.95" height="22.05" fill="#D683CE"/><rect x="1200.70" y="442.95" width="13.95" height="22.05" fill="#EAB839"/><rect x="1221.17" y="487.05" width="13.95" height="22.05" fill="#705DA0"/><rect x="1221.17" y="442.95" width="13.95" height="44.10" fill="#FCE2DE"/><rect x="1241.64" y="487.05" width="13.95" height="22.05" fill="#BADFF4"/><rect x="1241.64" y="465.00" width="13.95" height="22.05" fill="#C15C17"/><rect x="1241.64" y="442.95" width="13.95" height="22.05" fill="#E5A8E2"/><rect x="124" y="593.9" width="380" height="1" fill="rgba(255,255,255,0.2)"/><rect x="124" y="616.8" width="380" height="1" fill="rgba(255,255,255,0.2)"/><rect x="124" y="639.8" width="380" height="1" fill="rgba(255,255,255,0.2)"/><rect x="124" y="662.7" width="380" height="1" fill="rgba(255,255,255,0.2)"/><rect x="129.1" y="594.4" width="1" height="68.8" fill="rgba(255,255,255,0.2)"/><rect x="223.9" y="594.4" width="1" height="68.8" fill="rgba(255,255,255,0.2)"/><rect x="318.9" y="594.4" width="1" height="68.8" fill="rgba(255,255,255,0.2)"/><rect x="414.0" y="594.4" width="1" height="68.8" fill="rgba(255,255,255,0.2)"/><polygon points="124.4,599.9 129.5,598.4 130.4,605.8 144.6,601.5 145.2,608.0 147.0,612.3 152.4,611.6 153.3,614.7 155.0,615.2 156.4,621.3 164.2,619.4 165.1,622.8 168.2,622.5 169.2,625.4 171.2,625.0 172.1,621.4 173.2,623.3 177.2,622.5 178.2,629.3 192.3,624.6 193.0,631.1 194.7,635.1 198.1,634.5 199.4,630.7 200.8,633.8 202.1,634.0 203.8,640.5 210.8,638.6 212.4,641.2 213.5,638.3 224.3,635.4 225.4,642.9 234.8,640.5 235.7,647.9 241.1,646.3 241.8,649.5 243.1,649.2 244.4,641.2 247.1,640.8 248.5,644.3 249.8,644.0 251.4,650.6 259.0,648.2 260.3,651.3 272.0,648.6 273.6,659.3 275.6,658.9 277.4,656.0 287.5,652.6 288.5,649.6 289.5,652.3 291.5,652.1 293.1,644.8 298.0,643.2 298.9,646.6 304.0,645.5 304.9,637.8 306.7,637.4 307.6,640.8 319.1,637.5 319.1,637.5 320.4,644.8 326.1,644.3 332.2,642.1 332.9,638.1 335.9,636.7 336.9,640.2 342.3,639.2 343.6,634.9 345.2,634.6 346.3,638.1 354.4,636.2 355.3,640.0 363.8,638.1 377.9,634.0 380.6,631.8 383.0,628.1 384.6,631.6 392.7,630.0 393.6,633.5 398.1,632.2 399.4,627.7 403.4,628.0 407.5,626.4 409.5,630.4 423.6,626.2 426.3,619.0 431.0,617.4 432.1,621.1 439.1,619.5 440.0,623.3 449.2,619.9 450.1,624.1 456.5,622.8 465.3,619.7 466.6,615.6 472.4,614.3 473.1,629.1 474.7,625.4 483.4,622.5 488.1,622.8 489.1,625.7 490.4,621.1 500.9,616.8 500.9,663.2 124.4,663.2" fill="rgba(31,120,193,0.1)"/><polyline points="124.4,599.9 129.5,598.4 130.4,605.8 144.6,601.5 145.2,608.0 147.0,612.3 152.4,611.6 153.3,614.7 155.0,615.2 156.4,621.3 164.2,619.4 165.1,622.8 168.2,622.5 169.2,625.4 171.2,625.0 172.1,621.4 173.2,623.3 177.2,622.5 178.2,629.3 192.3,624.6 193.0,631.1 194.7,635.1 198.1,634.5 199.4,630.7 200.8,633.8 202.1,634.0 203.8,640.5 210.8,638.6 212.4,641.2 213.5,638.3 224.3,635.4 225.4,642.9 234.8,640.5 235.7,647.9 241.1,646.3 241.8,649.5 243.1,649.2 244.4,641.2 247.1,640.8 248.5,644.3 249.8,644.0 251.4,650.6 259.0,648.2 260.3,651.3 272.0,648.6 273.6,659.3 275.6,658.9 277.4,656.0 287.5,652.6 288.5,649.6 289.5,652.3 291.5,652.1 293.1,644.8 298.0,643.2 298.9,646.6 304.0,645.5 304.9,637.8 306.7,637.4 307.6,640.8 319.1,637.5 319.1,637.5 320.4,644.8 326.1,644.3 332.2,642.1 332.9,638.1 335.9,636.7 336.9,640.2 342.3,639.2 343.6,634.9 345.2,634.6 346.3,638.1 354.4,636.2 355.3,640.0 363.8,638.1 377.9,634.0 380.6,631.8 383.0,628.1 384.6,631.6 392.7,630.0 393.6,633.5 398.1,632.2 399.4,627.7 403.4,628.0 407.5,626.4 409.5,630.4 423.6,626.2 426.3,619.0 431.0,617.4 432.1,621.1 439.1,619.5 440.0,623.3 449.2,619.9 450.1,624.1 456.5,622.8 465.3,619.7 466.6,615.6 472.4,614.3 473.1,629.1 474.7,625.4 483.4,622.5 488.1,622.8 489.1,625.7 490.4,621.1 500.9,616.8" fill="none" stroke="#1f78c1" stroke-width="1" stroke-linejoin="round"/><polygon points="555.8,664.5 751.0,664.5 751.0,689.6 555.8,689.6" fill="rgba(31,120,193,0.18)"/><polyline points="555.8,664.5 751.0,664.5" fill="none" stroke="#1f78c1" stroke-width="1" stroke-linejoin="round"/><polygon points="794.8,664.5 993.8,664.5 993.8,689.6 794.8,689.6" fill="rgba(31,120,193,0.18)"/><polyline points="794.8,664.5 993.8,664.5" fill="none" stroke="#1f78c1" stroke-width="1" stroke-linejoin="round"/><polygon points="1039.3,689.1 1047.0,682.3 1054.7,679.7 1062.3,687.5 1070.0,677.1 1077.7,677.1 1085.4,679.7 1093.1,677.1 1100.7,674.4 1108.4,687.5 1116.1,674.4 1123.8,677.1 1131.5,682.3 1139.1,682.3 1146.8,679.7 1154.5,679.7 1162.2,687.5 1169.9,682.3 1177.5,687.5 1185.2,679.7 1192.9,679.7 1200.6,679.7 1208.3,674.4 1215.9,679.7 1223.6,671.8 1231.3,684.9 1239.0,684.9 1246.7,679.7 1254.3,682.3 1262.0,682.3 1269.7,679.7 1277.4,679.7 1285.1,674.4 1292.7,677.1 1300.4,664.0 1308.1,679.7 1315.8,677.1 1323.5,684.9 1331.1,679.7 1338.8,684.9 1346.5,684.9 1354.2,671.8 1361.9,677.1 1369.5,679.7 1377.2,679.7 1384.9,679.7 1392.6,679.7 1400.3,682.3 1407.9,677.1 1415.6,682.3 1423.3,671.8 1431.0,669.2 1438.7,677.1 1446.3,682.3 1454.0,682.3 1461.7,684.9 1469.4,682.3 1477.1,689.3 1484.7,689.3 1492.4,689.3 1500.1,689.3 1500.1,689.6 1039.3,689.6" fill="rgba(31,120,193,0.18)"/><polyline points="1039.3,689.1 1047.0,682.3 1054.7,679.7 1062.3,687.5 1070.0,677.1 1077.7,677.1 1085.4,679.7 1093.1,677.1 1100.7,674.4 1108.4,687.5 1116.1,674.4 1123.8,677.1 1131.5,682.3 1139.1,682.3 1146.8,679.7 1154.5,679.7 1162.2,687.5 1169.9,682.3 1177.5,687.5 1185.2,679.7 1192.9,679.7 1200.6,679.7 1208.3,674.4 1215.9,679.7 1223.6,671.8 1231.3,684.9 1239.0,684.9 1246.7,679.7 1254.3,682.3 1262.0,682.3 1269.7,679.7 1277.4,679.7 1285.1,674.4 1292.7,677.1 1300.4,664.0 1308.1,679.7 1315.8,677.1 1323.5,684.9 1331.1,679.7 1338.8,684.9 1346.5,684.9 1354.2,671.8 1361.9,677.1 1369.5,679.7 1377.2,679.7 1384.9,679.7 1392.6,679.7 1400.3,682.3 1407.9,677.1 1415.6,682.3 1423.3,671.8 1431.0,669.2 1438.7,677.1 1446.3,682.3 1454.0,682.3 1461.7,684.9 1469.4,682.3 1477.1,689.3 1484.7,689.3 1492.4,689.3 1500.1,689.3" fill="none" stroke="#1f78c1" stroke-width="1" stroke-linejoin="round"/><polygon points="62.2,808.9 261.1,752.2 261.1,809.6 62.2,809.6" fill="rgba(31,120,193,0.18)"/><polyline points="62.2,808.9 261.1,752.2" fill="none" stroke="#1f78c1" stroke-width="1" stroke-linejoin="round"/><polygon points="311.0,794.6 506.0,794.6 506.0,809.6 311.0,809.6" fill="rgba(31,120,193,0.18)"/><polyline points="311.0,794.6 506.0,794.6" fill="none" stroke="#1f78c1" stroke-width="1" stroke-linejoin="round"/><polygon points="552.0,810.0 574.1,810.0 577.6,804.1 581.2,810.0 729.8,810.0 733.1,804.2 736.7,810.0 740.2,794.6 743.9,810.0 751.3,810.0 751.3,809.6 552.0,809.6" fill="rgba(31,120,193,0.18)"/><polyline points="552.0,810.0 574.1,810.0 577.6,804.1 581.2,810.0 729.8,810.0 733.1,804.2 736.7,810.0 740.2,794.6 743.9,810.0 751.3,810.0" fill="none" stroke="#1f78c1" stroke-width="1" stroke-linejoin="round"/><polygon points="796.6,809.1 800.6,794.6 804.8,809.1 808.3,809.1 811.7,794.6 815.5,809.1 818.6,794.6 822.4,794.6 825.9,809.1 829.7,794.6 833.3,809.1 837.0,794.6 840.6,809.1 844.2,794.6 851.5,794.6 855.3,809.1 858.7,809.1 862.2,794.6 866.3,794.6 869.5,809.1 873.3,794.6 876.7,809.1 880.2,809.1 884.0,794.6 887.4,809.1 891.2,794.6 894.7,809.1 898.5,794.6 902.0,809.1 905.8,794.6 909.6,809.1 920.0,809.1 923.1,794.6 925.9,794.6 931.1,809.1 934.9,794.6 945.6,794.6 949.1,809.1 952.9,794.6 978.1,794.6 981.6,809.1 985.4,794.6 996.1,794.6 996.1,810.0 796.6,810.0" fill="rgba(31,120,193,0.18)"/><polyline points="796.6,809.1 800.6,794.6 804.8,809.1 808.3,809.1 811.7,794.6 815.5,809.1 818.6,794.6 822.4,794.6 825.9,809.1 829.7,794.6 833.3,809.1 837.0,794.6 840.6,809.1 844.2,794.6 851.5,794.6 855.3,809.1 858.7,809.1 862.2,794.6 866.3,794.6 869.5,809.1 873.3,794.6 876.7,809.1 880.2,809.1 884.0,794.6 887.4,809.1 891.2,794.6 894.7,809.1 898.5,794.6 902.0,809.1 905.8,794.6 909.6,809.1 920.0,809.1 923.1,794.6 925.9,794.6 931.1,809.1 934.9,794.6 945.6,794.6 949.1,809.1 952.9,794.6 978.1,794.6 981.6,809.1 985.4,794.6 996.1,794.6" fill="none" stroke="#1f78c1" stroke-width="1" stroke-linejoin="round"/><polygon points="1041.9,799.2 1048.8,797.3 1053.1,799.5 1056.5,797.3 1071.1,796.1 1074.5,799.5 1078.8,796.1 1086.5,798.1 1094.1,797.3 1100.3,799.2 1103.4,798.1 1107.2,799.5 1112.6,797.3 1121.8,796.1 1125.6,797.6 1129.2,795.6 1132.6,798.4 1137.2,798.4 1143.3,797.3 1147.9,797.9 1157.1,796.6 1161.0,796.9 1164.8,794.6 1168.7,797.3 1172.5,797.6 1175.6,798.6 1178.7,797.3 1184.8,798.6 1190.6,795.6 1195.6,797.3 1203.2,797.6 1209.4,797.9 1216.3,796.6 1219.4,798.1 1225.5,795.0 1230.9,796.9 1235.5,798.4 1240.9,798.4 1240.9,809.6 1041.9,809.6" fill="rgba(31,120,193,0.18)"/><polyline points="1041.9,799.2 1048.8,797.3 1053.1,799.5 1056.5,797.3 1071.1,796.1 1074.5,799.5 1078.8,796.1 1086.5,798.1 1094.1,797.3 1100.3,799.2 1103.4,798.1 1107.2,799.5 1112.6,797.3 1121.8,796.1 1125.6,797.6 1129.2,795.6 1132.6,798.4 1137.2,798.4 1143.3,797.3 1147.9,797.9 1157.1,796.6 1161.0,796.9 1164.8,794.6 1168.7,797.3 1172.5,797.6 1175.6,798.6 1178.7,797.3 1184.8,798.6 1190.6,795.6 1195.6,797.3 1203.2,797.6 1209.4,797.9 1216.3,796.6 1219.4,798.1 1225.5,795.0 1230.9,796.9 1235.5,798.4 1240.9,798.4" fill="none" stroke="#1f78c1" stroke-width="1" stroke-linejoin="round"/><polygon points="1286.9,804.5 1290.7,798.6 1294.6,801.5 1298.1,804.5 1301.8,800.2 1305.3,802.2 1309.2,801.5 1312.7,800.4 1316.1,801.0 1319.9,804.5 1323.5,796.4 1327.2,803.0 1330.7,805.3 1334.5,802.2 1337.6,801.5 1341.5,802.7 1345.3,803.8 1348.8,801.2 1352.5,804.2 1356.0,800.4 1359.9,805.3 1363.4,800.2 1367.1,802.2 1370.6,803.8 1374.5,802.2 1378.0,805.6 1381.4,804.1 1385.2,800.4 1388.3,799.5 1392.2,801.5 1395.7,799.6 1399.8,801.9 1403.7,802.6 1406.8,803.3 1410.6,803.3 1414.0,804.2 1417.5,801.5 1421.4,805.3 1425.2,803.0 1428.3,801.5 1431.8,804.1 1435.5,794.3 1439.0,802.2 1442.9,803.8 1446.7,803.3 1450.1,804.1 1453.6,805.0 1457.5,805.6 1461.0,794.6 1464.4,803.3 1468.2,799.5 1471.6,798.6 1475.1,800.2 1479.0,801.0 1482.8,801.8 1485.9,802.7 1485.9,809.6 1286.9,809.6" fill="rgba(31,120,193,0.18)"/><polyline points="1286.9,804.5 1290.7,798.6 1294.6,801.5 1298.1,804.5 1301.8,800.2 1305.3,802.2 1309.2,801.5 1312.7,800.4 1316.1,801.0 1319.9,804.5 1323.5,796.4 1327.2,803.0 1330.7,805.3 1334.5,802.2 1337.6,801.5 1341.5,802.7 1345.3,803.8 1348.8,801.2 1352.5,804.2 1356.0,800.4 1359.9,805.3 1363.4,800.2 1367.1,802.2 1370.6,803.8 1374.5,802.2 1378.0,805.6 1381.4,804.1 1385.2,800.4 1388.3,799.5 1392.2,801.5 1395.7,799.6 1399.8,801.9 1403.7,802.6 1406.8,803.3 1410.6,803.3 1414.0,804.2 1417.5,801.5 1421.4,805.3 1425.2,803.0 1428.3,801.5 1431.8,804.1 1435.5,794.3 1439.0,802.2 1442.9,803.8 1446.7,803.3 1450.1,804.1 1453.6,805.0 1457.5,805.6 1461.0,794.6 1464.4,803.3 1468.2,799.5 1471.6,798.6 1475.1,800.2 1479.0,801.0 1482.8,801.8 1485.9,802.7" fill="none" stroke="#1f78c1" stroke-width="1" stroke-linejoin="round"/><rect x="1495" y="234" width="6" height="51" rx="3" fill="#3d3f50"/><rect x="1514" y="110" width="6" height="210" rx="3" fill="#3a3c4e"/><rect x="1520" y="105" width="1" height="705" fill="#0b0b0f"/><defs><linearGradient id="sbg" x1="0" x2="1" y1="0" y2="0"><stop offset="0" stop-color="#494b60"/><stop offset="1" stop-color="#3e3f43"/></linearGradient></defs><rect x="1521" y="106" width="7" height="704" fill="url(#sbg)"/></svg>
<svg class="abs" style="left:0;top:0" width="1562" height="900" viewBox="0 0 1562 900">
<!-- tab curves -->
<path d="M104 68 h8 v-8 a8 8 0 0 1 -8 8z" fill="#35363a"/>
<path d="M360 68 h-8 v-8 a8 8 0 0 0 8 8z" fill="#35363a"/>
<!-- favicon -->
<circle cx="132" cy="50.7" r="8.2" fill="#10cdd6"/>
<g stroke="#fff" stroke-width="0.9" fill="none" stroke-linecap="round">
<path d="M135.8 46.2 C134.8 45.5 133.8 45.9 133.4 47.2 L131.6 54 C131.2 55.4 129.9 56 128.6 55.3"/>
<path d="M129.5 50.7 L135 49.7 M129.9 52.2 L135 51.3"/>
</g>
<!-- tab close, plus -->
<path d="M332.5 47.5 l7 7 M339.5 47.5 l-7 7" stroke="#e3e5e8" stroke-width="1.5" fill="none"/>
<path d="M368.5 51 h11 M374 45.5 v11" stroke="#c8cacd" stroke-width="1.8" fill="none"/>
<!-- nav arrows -->
<g stroke="#85878b" stroke-width="1.9" fill="none">
<path d="M63 86 h-12.6 M56.6 79.4 l-6.6 6.6 l6.6 6.6"/>
<path d="M81 86 h12.6 M87.4 79.4 l6.6 6.6 l-6.6 6.6"/>
<path d="M125.4 81.6 a6.3 6.3 0 1 0 1 6"/>
</g>
<path d="M127 79.2 v5.8 h-5.8z" fill="#85878b"/>
<!-- lock -->
<rect x="156" y="84.5" width="7.6" height="6.6" rx="0.8" fill="#e8eaed"/>
<path d="M157.6 84.6 v-1.8 a2.2 2.2 0 0 1 4.4 0 v1.8" stroke="#e8eaed" stroke-width="1.2" fill="none"/>
<!-- star -->
<path d="M1210 79.6 l1.9 4.3 4.6 0.4 -3.5 3.1 1.05 4.55 -4.05 -2.4 -4.05 2.4 1.05 -4.55 -3.5 -3.1 4.6 -0.4z" stroke="#c6c8cc" stroke-width="1.2" fill="none" stroke-linejoin="round"/>
<!-- mail ext -->
<path d="M1242.8 82 l7.2 -4.3 7.2 4.3 v5.4 h-14.4z" fill="#4ec5c6"/>
<path d="M1243.6 82.3 l6.4 3.6 6.4 -3.6" stroke="#3aa5a8" stroke-width="0.9" fill="none"/>
<rect x="1240" y="88" width="20" height="12" rx="1.6" fill="#3a8a8c"/>
<text x="1250" y="97.4" font-family="'Liberation Sans',sans-serif" font-size="9.3" fill="#fff" text-anchor="middle" >177</text>
<!-- face ext -->
<rect x="1274.1" y="80" width="15.8" height="13.8" rx="0.8" fill="#f1c9a5"/>
<rect x="1277.9" y="77.8" width="8.1" height="3" rx="0.6" fill="#2f8fe6"/>
<circle cx="1278" cy="86.3" r="1.25" fill="#1c1c1c"/><circle cx="1286" cy="86.3" r="1.25" fill="#1c1c1c"/>
<path d="M1281.2 87.4 l1 1.1 1 -1.1" stroke="#1c1c1c" stroke-width="0.8" fill="none"/>
<!-- youtube -->
<linearGradient id="ytg" x1="0" x2="0" y1="0" y2="1"><stop offset="0" stop-color="#e8332b"/><stop offset="1" stop-color="#bd1a1e"/></linearGradient>
<rect x="1306.7" y="80.7" width="14.7" height="10.5" rx="3.4" fill="url(#ytg)"/>
<rect x="1306.2" y="85.5" width="15.7" height="1" fill="#fff" opacity="0.35"/>
<path d="M1312.2 83.3 l4.7 2.7 -4.7 2.7z" fill="#fff"/>
<!-- Z -->
<rect x="1338" y="78" width="16" height="15.8" fill="#3c4ca8"/>
<text x="1346" y="91.2" font-family="'Liberation Sans',sans-serif" font-size="14.5" font-weight="bold" fill="#fff" text-anchor="middle">Z</text>
<!-- metamask fox -->
<path d="M1370 78.3 L1376.3 82.6 L1379.7 82.6 L1386 78.3 L1385.3 85 L1386.2 88.6 L1384.6 92.2 L1380.4 91.2 L1379.2 92.9 L1376.8 92.9 L1375.6 91.2 L1371.4 92.2 L1369.8 88.6 L1370.7 85 Z" fill="#e9811e"/>
<path d="M1370 78.3 L1376.3 82.6 L1373.6 86.4 L1370.7 85Z M1386 78.3 L1379.7 82.6 L1382.4 86.4 L1385.3 85Z" fill="#b6601d"/>
<path d="M1376.3 82.6 h3.4 l2.7 3.8 -1.4 3.6 h-6 l-1.4 -3.6z" fill="#f5923a"/>
<path d="M1373.8 87.2 l1.8 0.5 -1.2 0.7z M1382.2 87.2 l-1.8 0.5 1.2 0.7z" fill="#3a2a22"/>
<path d="M1376.2 90.6 h3.6 l-0.5 2.3 h-2.6z" fill="#d9c7ba"/>
<path d="M1377 91.3 h2 l-0.3 0.9 h-1.4z" fill="#2a3543"/>
<!-- puzzle -->
<path transform="translate(-1.2 1.2)" d="M1408.4 79.2 a1.9 1.9 0 0 1 3.8 0 v1.1 h2.8 a1.2 1.2 0 0 1 1.2 1.2 v2.6 h1 a2 2 0 0 1 0 4 h-1 v2.9 a1.2 1.2 0 0 1 -1.2 1.2 h-2.8 v-0.9 a1.9 1.9 0 0 0 -3.8 0 v0.9 h-2.8 a1.2 1.2 0 0 1 -1.2 -1.2 v-2.7 h0.9 a2 2 0 0 0 0 -4 h-0.9 v-2.8 a1.2 1.2 0 0 1 1.2 -1.2 h2.8z" fill="#f1f3f4"/>
<!-- media -->
<g stroke="#7d7f83" stroke-width="1.5" fill="none"><path d="M1434 80.9 h9.9 M1434 84.6 h9.9 M1434 88.6 h6.6"/><path d="M1447.3 89.6 v-9 h2.6"/></g>
<circle cx="1445.3" cy="89.7" r="2.3" fill="#7d7f83"/>
<!-- avatar -->
<clipPath id="av"><circle cx="1474" cy="86" r="11"/></clipPath>
<circle cx="1474" cy="86" r="11" fill="#f4f2ef"/>
<g clip-path="url(#av)">
<path d="M1470.2 77.2 C1474.4 75.4 1478.4 77.6 1478.8 82 C1479 86 1477.8 89.5 1479.6 95.5 L1465.6 98 C1467.2 92 1466.4 86.4 1467.4 81.6 C1467.9 79.2 1469 77.8 1470.2 77.2Z" fill="#6b3d28"/>
<path d="M1476 90 C1480.5 90.6 1484 93.4 1486 98 L1470 99 L1472.4 93 L1474 95.4Z" fill="#1b2a4c"/>
<path d="M1472.6 90.6 L1476 90 L1474.1 94.6 L1472.8 92.6Z" fill="#e9bda4"/>
<ellipse cx="1473.7" cy="83.6" rx="3.5" ry="4.4" fill="#e7b69c" transform="rotate(-6 1473.7 83.6)"/>
<path d="M1470.4 79.6 C1472 78.2 1475.4 78 1477.2 80.2 C1475.4 79.6 1472.6 79.6 1470.8 81.4 C1470.3 83.6 1470.5 87 1469.4 91 C1468.8 93.6 1469.2 96 1470.4 98 L1466.8 98 C1467.6 92.6 1467.4 84 1470.4 79.6Z" fill="#7a4730"/>
<path d="M1472 85.6 q1.8 1.3 3.6 -0.2" stroke="#fff" stroke-width="0.7" fill="none" opacity="0.85"/>
<circle cx="1472.2" cy="82.8" r="0.45" fill="#5a3a2c"/><circle cx="1475.4" cy="82.5" r="0.45" fill="#5a3a2c"/>
</g>
<!-- menu dots -->
<circle cx="1506.3" cy="81.5" r="1.5" fill="#8f9195"/><circle cx="1506.3" cy="86.5" r="1.5" fill="#8f9195"/><circle cx="1506.3" cy="91.5" r="1.5" fill="#8f9195"/>
<!-- Filecoin logo -->
<circle cx="68.5" cy="132.5" r="18.6" fill="#42c1ca"/>
<g stroke="#fff" stroke-width="1.3" fill="none" stroke-linecap="round">
<path d="M77.2 122 C75 120.6 72.6 121.4 71.8 124.4 L67.6 139.6 C66.6 143 63.6 144.4 60.8 142.6"/>
<path d="M62.8 132.4 L75.2 130.2 M63.6 135.6 L75.2 133.6"/>
</g>
<!-- clock icon for Last 4 hours -->
<circle cx="429.6" cy="563.2" r="4" stroke="#33b5e5" stroke-width="1.5" fill="none"/>
<path d="M429.6 561 v2.4 h-1.8" stroke="#33b5e5" stroke-width="1" fill="none"/>
<!-- avg caret -->
<path d="M1479.5 238 h6.4 l-3.2 3.4z" fill="#33b5e5"/>
</svg>

</div><div style="position:absolute;left:0;top:0;right:0;bottom:0;border-radius:5.5px;border:1px solid rgba(0,0,0,0.82);box-shadow:inset 0 0 0 1px rgba(255,255,255,0.17);pointer-events:none"></div></div></body></html>
